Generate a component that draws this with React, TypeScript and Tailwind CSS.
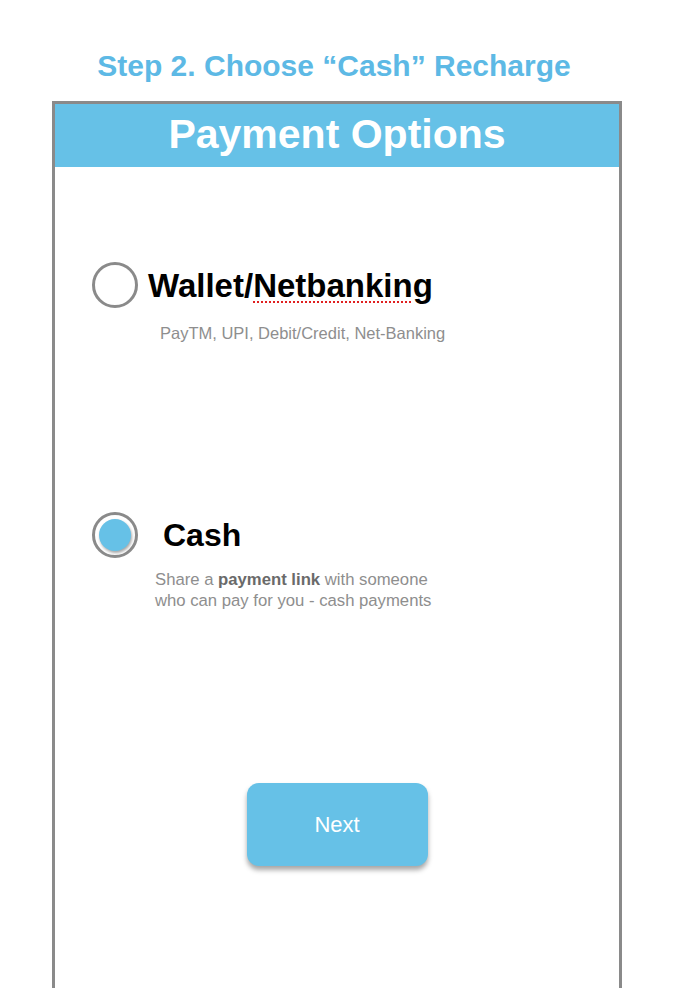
import React from "react";

export default function App() {
  return (
    <div
      className="w-[674px] h-[988px] overflow-hidden bg-white flex flex-col"
      style={{ fontFamily: '"Liberation Sans", Arial, sans-serif' }}
    >
      <h1 className="mt-[50px] h-[32px] text-center text-[30px] leading-[32px] font-bold text-[#5db9e5] pr-[6px]">
        Step 2. Choose “Cash” Recharge
      </h1>
      <div className="mt-[19px] ml-[52px] w-[570px] flex-1 border-[3px] border-b-0 border-[#8a8a8a] bg-white flex flex-col">
        <div className="h-[63px] bg-[#66c1e7] flex items-center justify-center">
          <span className="text-white font-bold text-[41px] leading-none mt-[-2px]">Payment Options</span>
        </div>

        <div className="mt-[95px] pl-[37px] flex items-center">
          <div className="w-[46px] h-[46px] rounded-full border-[3px] border-[#8a8a8a]" />
          <div className="ml-[10px] text-[33px] font-bold text-black leading-none mt-[1px]">
            Wallet/
            <span className="underline decoration-dotted decoration-[#e02020] decoration-2 underline-offset-[4px]">
              Netbanking
            </span>
          </div>
        </div>
        <div className="mt-[15px] pl-[105px] text-[16.5px] leading-[20px] text-[#8e8e8e]">
          PayTM, UPI, Debit/Credit, Net-Banking
        </div>

        <div className="mt-[169px] pl-[37px] flex items-center">
          <div className="w-[46px] h-[46px] rounded-full border-[3px] border-[#8a8a8a] flex items-center justify-center">
            <div className="w-[32px] h-[32px] rounded-full bg-[#66c1e7] shadow-[1px_2px_3px_rgba(0,0,0,0.35)]" />
          </div>
          <div className="ml-[25px] text-[32px] font-bold text-black leading-none">Cash</div>
        </div>
        <div className="mt-[11px] pl-[100px] text-[16.7px] leading-[21px] text-[#8e8e8e]">
          Share a <span className="font-bold text-[#6a6a6a]">payment link</span> with someone
          <br />
          who can pay for you - cash payments
        </div>

        <div className="mt-[172px] flex justify-center">
          <button className="w-[181px] h-[83px] rounded-[12px] bg-[#66c1e7] text-white text-[22px] font-light shadow-[0_4px_5px_rgba(0,0,0,0.35)]">
            Next
          </button>
        </div>
      </div>
    </div>
  );
}
